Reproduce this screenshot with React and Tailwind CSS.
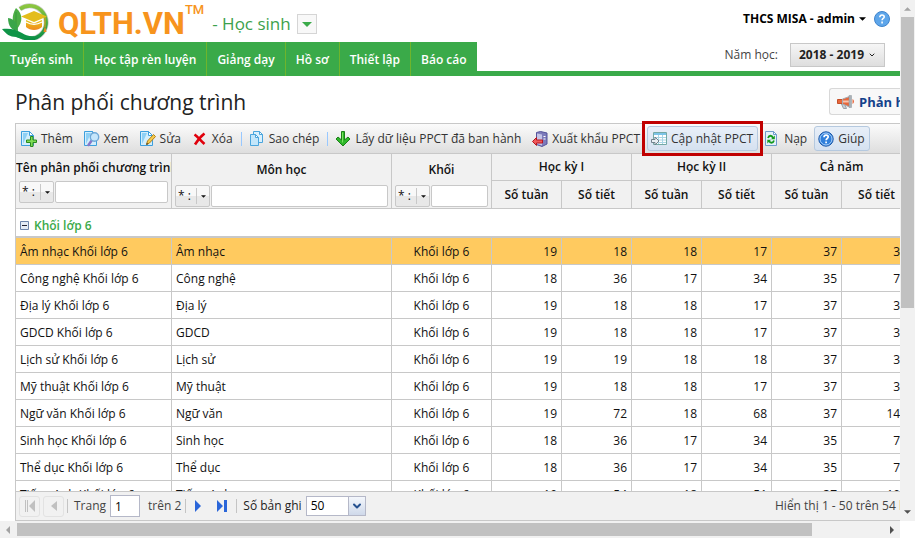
import { ChevronDown } from 'lucide-react';

const navItems = ['Tuyển sinh', 'Học tập rèn luyện', 'Giảng dạy', 'Hồ sơ', 'Thiết lập', 'Báo cáo'];

const rows = [
  { subject: 'Âm nhạc', values: [19, 18, 18, 17, 37, 35], selected: true },
  { subject: 'Công nghệ', values: [18, 36, 17, 34, 35, 70] },
  { subject: 'Địa lý', values: [19, 18, 18, 17, 37, 35] },
  { subject: 'GDCD', values: [19, 18, 18, 17, 37, 35] },
  { subject: 'Lịch sử', values: [19, 19, 18, 18, 37, 37] },
  { subject: 'Mỹ thuật', values: [19, 18, 18, 17, 37, 35] },
  { subject: 'Ngữ văn', values: [19, 72, 18, 68, 37, 140] },
  { subject: 'Sinh học', values: [18, 36, 17, 34, 35, 70] },
  { subject: 'Thể dục', values: [18, 36, 17, 34, 35, 70] },
  { subject: 'Tiếng Anh', values: [19, 54, 18, 51, 37, 105] },
];

function Logo() {
  return (
    <svg viewBox="0 0 50 40" className="w-[50px] h-10" aria-hidden="true">
      <defs>
        <linearGradient id="ring" x1="0" y1="0" x2="0" y2="1">
          <stop offset="0" stopColor="#8cc63f" />
          <stop offset="1" stopColor="#0a8f45" />
        </linearGradient>
        <linearGradient id="cap" x1="0" y1="0" x2="0" y2="1">
          <stop offset="0" stopColor="#e8c518" />
          <stop offset="1" stopColor="#f08a1d" />
        </linearGradient>
      </defs>
      <path d="M18 9a16.500 16.500 0 1 1-2 25" fill="none" stroke="#c9cdc9" strokeWidth="5" />
      <path d="M18 9a16.500 16.500 0 1 1-3 24" fill="none" stroke="url(#ring)" strokeWidth="3.500" />
      <path d="M14 8c7 6 7 14 1 21c-5-5-6-13-1-21z" fill="#4cae45" />
      <path d="M14 12v17" stroke="#2f8f38" strokeWidth=".7" />
      <path d="M6 18c7 1 10 6 10 13c-6 0-10-5-10-13z" fill="#3aa548" />
      <path d="M0 29c7-1 14 0 20 4c3 2 8 4 14 3c-7 3-15 4-20 1c-6 0-10-3-14-8z" fill="#0f9447" />
      <path d="M19 16.500l13-5.500l13 5.500l-13 5.500z" fill="#e3bd1c" />
      <path d="M24 20v7c4 4 12 4 16 0v-7l-8 3.500z" fill="url(#cap)" />
      <path d="M24 22c5 3 11 3 16 0" fill="none" stroke="#fff" strokeWidth="1.200" />
      <path d="M43 17v10" stroke="#e9a31b" />
      <path d="M41.500 32l1.500-6l1.500 6z" fill="#f08a1d" />
    </svg>
  );
}

function PageIcon({ children }) {
  return (
    <svg viewBox="0 0 16 16" className="w-4 h-4 shrink-0" aria-hidden="true">
      <path d="M.5.5h8l4 4v10h-12z" fill="#d3eefc" stroke="#3d9fdd" />
      <path d="M2 13V2h5z" fill="#8ed0f5" />
      <path d="M8.500.5v4h4z" fill="#fff" stroke="#3d9fdd" />
      {children}
    </svg>
  );
}

function AddIcon() {
  return (
    <PageIcon>
      <path d="M9.500 5.500h2.500v3.500h3.500v2.500h-3.500v4h-2.500v-4h-4v-2.500h4v-3.500z" fill="#7fdc55" stroke="#2b8a1e" />
    </PageIcon>
  );
}

function ViewIcon() {
  return (
    <PageIcon>
      <path d="M8 9l-3.500 5" stroke="#8878c9" strokeWidth="2.500" strokeLinecap="round" />
      <circle cx="10.500" cy="6" r="4.200" fill="#c5e6fb" stroke="#6fa9d8" strokeWidth="1.400" />
    </PageIcon>
  );
}

function EditIcon() {
  return (
    <PageIcon>
      <path d="M6.500 13.500l1-3.500l6-6.500l2 2l-6 6.500z" fill="#f6cb4d" stroke="#b07e17" />
      <path d="M6.300 13.800l.6-2l1.400 1.400z" fill="#333" />
    </PageIcon>
  );
}

function DeleteIcon() {
  return (
    <svg viewBox="0 0 16 16" className="w-4 h-4 shrink-0" aria-hidden="true">
      <path d="M2.500 3.500c3 2 6 6 10 9.500M12.500 2.500c-4 3-7 7-9.500 11" fill="none" stroke="#e0000c" strokeWidth="2.600" />
    </svg>
  );
}

function CopyIcon() {
  return (
    <svg viewBox="0 0 16 16" className="w-4 h-4 shrink-0" aria-hidden="true">
      <path d="M4.500.5h6l3 3v8h-9z" fill="#d9f0fd" stroke="#4aa5dd" />
      <path d="M10.500.5v3h3z" fill="#fff" stroke="#4aa5dd" />
      <path d="M1.500 3.500h5l3 3v8h-8z" fill="#c3e6fa" stroke="#4aa5dd" />
      <path d="M6.500 3.500v3h3z" fill="#fff" stroke="#4aa5dd" />
    </svg>
  );
}

function DownIcon() {
  return (
    <svg viewBox="0 0 16 16" className="w-4 h-4 shrink-0" aria-hidden="true">
      <path d="M6.500.5h3v8.500l3.500-3l2 2l-7 7l-7-7l2-2l3.500 3z" fill="#2eb82a" stroke="#1d7f19" strokeLinejoin="round" />
      <path d="M7.500 1.500v10" stroke="#7be35f" />
    </svg>
  );
}

function ExportIcon() {
  return (
    <svg viewBox="0 0 16 16" className="w-4 h-4 shrink-0" aria-hidden="true">
      <path d="M4.500 1.500l4-1l6.500 1.500v11l-5 2.500l-5.500-2z" fill="#7d7bbb" stroke="#55539a" />
      <path d="M5 2.500l5 1v11l-5-1.500z" fill="#c4c3e6" />
      <path d="M11.500 5.500h2M11.500 8h2" stroke="#fff" />
      <path d="M.5 10.500l4-4v2.500h6v3h-6v2.500z" fill="#f05a5a" stroke="#b51720" />
    </svg>
  );
}

function UpdateIcon() {
  return (
    <svg viewBox="0 0 16 16" className="w-4 h-4 shrink-0" aria-hidden="true">
      <path d="M2.500 1.500h13v12h-13z" fill="#fff" stroke="#74a9a5" />
      <path d="M3 2h12v2h-12z" fill="#7cc4e8" />
      <path d="M3 6.500h12M3 9h12M3 11.500h12M7.500 4v9M11.500 4v9" stroke="#a9d6e6" />
      <path d="M.5 8.500h3.500v-2.500l4 4l-4 4v-2.500h-3.500z" fill="#e9eff3" stroke="#71818c" />
    </svg>
  );
}

function ReloadIcon() {
  return (
    <svg viewBox="0 0 16 16" className="w-4 h-4 shrink-0" aria-hidden="true">
      <path d="M1.500.5h8l3 3v11h-11z" fill="#e6f0fa" stroke="#6f9ccb" />
      <path d="M9.500.5v3h3z" fill="#fff" stroke="#6f9ccb" />
      <path d="M4 7c1-3 4-3 5 0" fill="none" stroke="#149a1c" strokeWidth="1.800" />
      <path d="M10.800 4.500v3.800h-3.800z" fill="#149a1c" />
      <path d="M10 9.500c-1 3-4 3-5 0" fill="none" stroke="#149a1c" strokeWidth="1.800" />
      <path d="M3.300 12.500v-3.800h3.800z" fill="#149a1c" />
    </svg>
  );
}

function HelpIcon() {
  return (
    <svg viewBox="0 0 16 16" className="w-4 h-4 shrink-0" aria-hidden="true">
      <circle cx="8" cy="8" r="7.200" fill="#2f7fdb" stroke="#1c57a6" />
      <circle cx="8" cy="8" r="6" fill="none" stroke="#a9d0fa" />
      <path d="M6 6.300c0-3 4.200-2.700 4.200-.3c0 1.500-2.100 1.500-2.100 3.200M8.100 10.500v1.700" fill="none" stroke="#fff" strokeWidth="1.700" />
    </svg>
  );
}

function MegaphoneIcon() {
  return (
    <svg viewBox="0 0 18 16" className="w-[18px] h-4 shrink-0" aria-hidden="true">
      <path d="M4.500 10h3l2 4.500h-3z" fill="#c9ced3" stroke="#98a0a8" />
      <path d="M.5 5.500h5v4h-5z" fill="#e8673b" stroke="#c4502a" />
      <path d="M5.500 5l7-2.500v10.500l-7-3z" fill="#e8673b" stroke="#a5adb4" />
      <path d="M6 7.500h6" stroke="#f5c4b0" strokeWidth="2" />
      <path d="M12 1.500h2.500v12h-2.500z" fill="#aab1b7" stroke="#8d959c" strokeWidth=".5" />
      <path d="M15.500 5c2 1 2 4 0 5z" fill="#e8673b" />
    </svg>
  );
}

function Caret({ className }) {
  return (
    <svg viewBox="0 0 8 4" className={className} aria-hidden="true">
      <path d="M0 0h8l-4 4z" fill="currentColor" />
    </svg>
  );
}

function Separator() {
  return <span className="w-px h-3.5 bg-[#98c8ff] mx-px" />;
}

function ToolButton({ icon, active, marked, children }) {
  return (
    <button
      type="button"
      className={`relative flex items-center gap-1 h-[25px] shrink-0 pl-[3px] pr-1 border rounded-[3px] whitespace-nowrap ${
        active ? 'border-[#b5c9df] bg-linear-to-b from-[#e8eff8] to-[#d5e1f0]' : 'border-transparent'
      }`}
    >
      {icon}
      {children}
      {marked && <span className="absolute -inset-1.5 border-3 border-[#c00000]" />}
    </button>
  );
}

function Filter({ label }) {
  return (
    <div className="flex h-[22px] gap-px">
      <button
        type="button"
        aria-label={`Kiểu lọc ${label}`}
        className="flex items-center w-[35px] shrink-0 border border-[#c8c8c8] rounded-[2px] bg-linear-to-b from-[#f8f8f8] from-50% to-[#e8e8e8] to-50% font-normal"
      >
        <span className="w-5 text-left pl-0.5 whitespace-nowrap">* :</span>
        <span className="w-px h-4 bg-[#c8c8c8]" />
        <Caret className="w-[5px] h-[3px] ml-1" />
      </button>
      <input aria-label={label} className="min-w-0 flex-1 bg-white border border-[#c8c8c8] rounded-[2px] px-1 font-normal" />
    </div>
  );
}

function PagerIcon({ d, disabled }) {
  return (
    <svg viewBox="0 0 12 12" className={`w-3 h-3 ${disabled ? 'text-[#c0c0c0]' : 'text-[#2b66d9]'}`} aria-hidden="true">
      <path d={d} fill="currentColor" />
    </svg>
  );
}

function Header() {
  return (
    <header className="flex shrink-0">
      <div>
        <div className="flex h-[42px] pl-0.5">
          <Logo />
          <div className="flex pl-1.5 text-[#f7941d] font-[Roboto] font-bold">
            <span className="text-[31px] leading-[48px]">QLTH.VN</span>
            <sup className="text-[13px] leading-5 top-0 font-medium">TM</sup>
          </div>
          <span className="pl-2 pt-1.5 text-[17px] leading-9 text-[#3ca14c]">- Học sinh</span>
          <button type="button" aria-label="Chọn phân hệ" className="ml-1.5 mt-3.5 flex items-center justify-center w-5 h-5 border border-[#d5d5d5] bg-[#f8f8f8] text-[#3aaa49]">
            <Caret className="w-2.5 h-[5px]" />
          </button>
        </div>
        <nav className="flex w-max h-[34px] bg-[#3aaa49] text-white font-semibold">
          {navItems.map((item) => (
            <a key={item} href="#" className="flex items-center px-2.5 pt-0.5 border-r border-[#6fb52c] last:border-0 whitespace-nowrap">
              {item}
            </a>
          ))}
        </nav>
      </div>
      <div className="flex-1 flex flex-col items-end border-b-5 border-[#3aaa49] pr-2.5">
        <div className="flex items-center gap-2 pt-2.5 h-[28px]">
          <button type="button" className="flex items-center gap-1 font-bold text-black">
            THCS MISA - admin
            <Caret className="w-[7px] h-1" />
          </button>
          <a href="#" aria-label="Trợ giúp">
            <svg viewBox="0 0 16 16" className="w-4 h-4" aria-hidden="true">
              <circle cx="8" cy="8" r="7.500" fill="#5ea6ea" stroke="#3f84cc" />
              <path d="M5.800 6.200c0-3 4.400-2.700 4.400-.2c0 1.500-2.100 1.500-2.100 3.200M8.100 10.600v1.800" fill="none" stroke="#fff" strokeWidth="1.600" />
            </svg>
          </a>
        </div>
        <div className="flex items-center gap-3 pt-[15px] pr-[5px] text-[#444]">
          <span>Năm học:</span>
          <button type="button" className="flex items-center justify-center gap-1 w-[95px] h-6 border border-[#c8c8c8] bg-linear-to-b from-[#f6f6f6] to-[#dedede] font-bold text-[#222]">
            2018 - 2019
            <ChevronDown className="w-2 h-2" strokeWidth={3} />
          </button>
        </div>
      </div>
    </header>
  );
}

function Toolbar() {
  return (
    <div className="flex items-center gap-0.5 h-[30px] shrink-0 pl-px border-t border-[#c8c8c8] bg-linear-to-b from-[#fbfbfb] to-[#dedede] text-[#333]">
      <ToolButton icon={<AddIcon />}>Thêm</ToolButton>
      <ToolButton icon={<ViewIcon />}>Xem</ToolButton>
      <ToolButton icon={<EditIcon />}>Sửa</ToolButton>
      <ToolButton icon={<DeleteIcon />}>Xóa</ToolButton>
      <Separator />
      <ToolButton icon={<CopyIcon />}>Sao chép</ToolButton>
      <Separator />
      <ToolButton icon={<DownIcon />}>Lấy dữ liệu PPCT đã ban hành</ToolButton>
      <ToolButton icon={<ExportIcon />}>Xuất khẩu PPCT</ToolButton>
      <ToolButton icon={<UpdateIcon />} active marked>Cập nhật PPCT</ToolButton>
      <ToolButton icon={<ReloadIcon />}>Nạp</ToolButton>
      <ToolButton icon={<HelpIcon />} active>Giúp</ToolButton>
    </div>
  );
}

function Grid() {
  const head = 'border-r border-b border-[#c8c8c8] bg-[#f1f1f1] font-semibold p-0 overflow-hidden';
  const cell = 'border-r border-[#c8c8c8] px-1 pt-0.5 whitespace-nowrap';

  return (
    <div className="flex-1 min-h-0 overflow-hidden">
      <table className="table-fixed w-[896px] border-separate border-spacing-0 text-[#111]">
        <colgroup>
          <col className="w-[156px]" />
          <col className="w-[220px]" />
          <col className="w-[100px]" />
          <col span={6} className="w-[70px]" />
        </colgroup>
        <thead className="text-[#111]">
          <tr className="h-7">
            <th rowSpan={2} className={`${head} border-t align-top`}>
              <div className="h-[27px] leading-[27px] whitespace-nowrap text-left">Tên phân phối chương trình</div>
              <div className="px-[3px]"><Filter label="Tên phân phối chương trình" /></div>
            </th>
            <th rowSpan={2} className={`${head} border-t align-top`}>
              <div className="h-[31px] leading-8">Môn học</div>
              <div className="px-[3px]"><Filter label="Môn học" /></div>
            </th>
            <th rowSpan={2} className={`${head} border-t align-top`}>
              <div className="h-[31px] leading-8">Khối</div>
              <div className="px-[3px]"><Filter label="Khối" /></div>
            </th>
            <th colSpan={2} className={`${head} border-t`}>Học kỳ I</th>
            <th colSpan={2} className={`${head} border-t`}>Học kỳ II</th>
            <th colSpan={2} className={`${head} border-t`}>Cả năm</th>
          </tr>
          <tr className="h-7">
            {[0, 1, 2].map((i) => [
              <th key={`w${i}`} className={head}>Số tuần</th>,
              <th key={`p${i}`} className={head}>Số tiết</th>,
            ])}
          </tr>
        </thead>
        <tbody>
          <tr className="h-[29px]">
            <td colSpan={9} className="border-b-2 border-[#c8c8c8] pl-1 pt-1.5">
              <button type="button" className="flex items-center gap-[5px] font-semibold text-[#3aaa49]">
                <svg viewBox="0 0 9 9" className="w-[9px] h-[9px]" aria-hidden="true">
                  <path d="M.5.5h8v8h-8z" fill="#e4ebf5" stroke="#6c84ab" />
                  <path d="M2 4.500h5" stroke="#223" />
                </svg>
                Khối lớp 6
              </button>
            </td>
          </tr>
          {rows.map((row) => (
            <tr key={row.subject} className={`h-[27px] ${row.selected ? 'bg-[#ffca5f]' : 'bg-white'}`}>
              <td className={`${cell} border-b`}>{row.subject} Khối lớp 6</td>
              <td className={`${cell} border-b`}>{row.subject}</td>
              <td className={`${cell} border-b text-center`}>Khối lớp 6</td>
              {row.values.map((value, i) => (
                <td key={i} className={`${cell} border-b text-right`}>{value}</td>
              ))}
            </tr>
          ))}
        </tbody>
      </table>
    </div>
  );
}

function Pager() {
  return (
    <div className="flex items-center h-[30px] shrink-0 pl-[3px] border-y border-[#c8c8c8] bg-[#f1f1f1] text-[#444] whitespace-nowrap">
      <button type="button" disabled aria-label="Trang đầu" className="flex items-center justify-center w-[21px] h-[21px] border border-[#e2e2e2] rounded-[3px]">
        <PagerIcon disabled d="M1 0h1v12h-1zM11 0v12l-6-6zM3 0h1v12h-1z" />
      </button>
      <button type="button" disabled aria-label="Trang trước" className="ml-[3px] flex items-center justify-center w-[21px] h-[21px] border border-[#e2e2e2] rounded-[3px]">
        <PagerIcon disabled d="M9 1v10l-6-5z" />
      </button>
      <span className="w-px h-3.5 bg-[#c4c4c4] ml-[3px]" />
      <label className="flex items-center gap-1 pl-1.5">
        Trang
        <input defaultValue="1" className="w-[30px] h-[22px] px-1 border border-[#b5b8c8] bg-white text-black" />
      </label>
      <span className="pl-2 pr-1">trên 2</span>
      <span className="w-px h-3.5 bg-[#c4c4c4]" />
      <button type="button" aria-label="Trang sau" className="flex items-center justify-center w-6 h-[21px]">
        <PagerIcon d="M3 0v12l6-6z" />
      </button>
      <button type="button" aria-label="Trang cuối" className="flex items-center justify-center w-6 h-[21px]">
        <PagerIcon d="M1 0v12l6-6zM8 0h3v12h-3z" />
      </button>
      <span className="w-px h-3.5 bg-[#c4c4c4] ml-0.5" />
      <label htmlFor="page-size" className="pl-1.5 pr-1 text-[#222]">Số bản ghi</label>
      <span className="relative flex">
        <select id="page-size" className="appearance-none w-[60px] h-5 px-1 border border-[#b5b8c8] bg-white text-black">
          <option>50</option>
        </select>
        <span className="absolute right-0 inset-y-0 w-[18px] flex items-center justify-center border border-[#b5b8c8] bg-linear-to-b from-[#f4f7fc] to-[#cfd9ea] text-[#24508f] pointer-events-none">
          <ChevronDown className="w-3 h-3" strokeWidth={4} />
        </span>
      </span>
      <span className="ml-auto w-[125px] shrink-0">Hiển thị 1 - 50 trên 54 kết quả</span>
    </div>
  );
}

export default function App() {
  return (
    <div className="h-screen grid grid-cols-[minmax(0,1fr)_17px] grid-rows-[minmax(0,1fr)_17px] bg-white overflow-hidden font-[Open_Sans,sans-serif] text-[12px] leading-4">
      <main className="flex flex-col min-h-0 overflow-hidden">
        <Header />
        <div className="flex items-center justify-between h-[47px] shrink-0 pl-[15px] pt-1">
          <h1 className="text-[21px] leading-7 text-[#222]">Phân phối chương trình</h1>
          <button type="button" className="flex items-center gap-1 w-[71px] h-[27px] pl-[7px] border border-r-0 border-[#d8d8d8] rounded-l-[3px] bg-[#f8f8f8] text-[13px] font-bold text-[#15428b] whitespace-nowrap overflow-hidden">
            <MegaphoneIcon />
            Phản hồi
          </button>
        </div>
        <section className="flex-1 min-h-0 ml-[15px] flex flex-col border-l border-[#c8c8c8]">
          <Toolbar />
          <Grid />
          <Pager />
        </section>
      </main>

      {/* Vertical scrollbar */}
      <div className="flex flex-col items-center justify-between bg-[#f1f1f1] mr-0.5 pt-[7px] pb-[7px] text-[#505050]">
        <Caret className="w-[7px] h-1 rotate-180 text-[#a3a3a3]" />
        <span className="w-[13px] flex-1 mt-1.5 mb-[202px] bg-[#c1c1c1]" />
        <Caret className="w-[7px] h-1" />
      </div>

      {/* Horizontal scrollbar */}
      <div className="flex items-center bg-[#f1f1f1] px-1.5 text-[#505050]">
        <svg viewBox="0 0 4 8" className="w-1 h-2 text-[#a3a3a3]" aria-hidden="true">
          <path d="M4 0v8l-4-4z" fill="currentColor" />
        </svg>
        <span className="h-[13px] flex-1 ml-[7px] mr-[78px] bg-[#c1c1c1]" />
        <svg viewBox="0 0 4 8" className="w-1 h-2" aria-hidden="true">
          <path d="M0 0v8l4-4z" fill="currentColor" />
        </svg>
      </div>
      <div className="bg-white" />
    </div>
  );
}
